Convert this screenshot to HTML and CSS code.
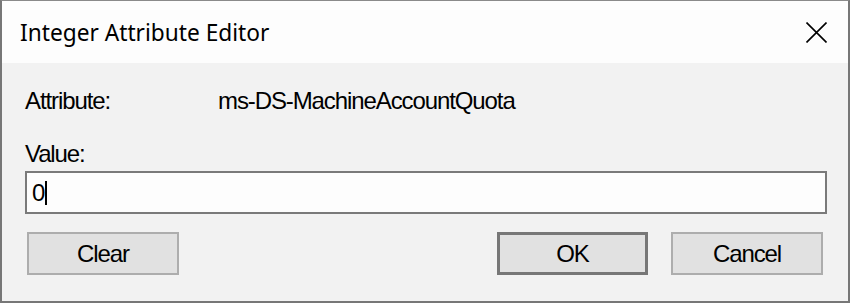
FILE: index.html
```html
<!DOCTYPE html>
<html>
<head>
<meta charset="utf-8">
<title>Integer Attribute Editor</title>
<link rel="stylesheet" href="styles.css">
</head>
<body>
<div class="window">
  <div class="titlebar">
    <span class="title">Integer Attribute Editor</span>
    <svg class="close" width="21" height="21" viewBox="0 0 21 21">
      <path d="M0.5 0.5 L20.5 20.5 M20.5 0.5 L0.5 20.5" stroke="#000" stroke-width="1.6" fill="none"/>
    </svg>
  </div>
  <div class="content">
    <div class="row attr">
      <span class="label">Attribute:</span>
      <span class="value">ms-DS-MachineAccountQuota</span>
    </div>
    <div class="row">
      <span class="label">Value:</span>
    </div>
    <div class="input"><span class="text">0</span><span class="caret"></span></div>
    <div class="buttons">
      <button class="btn">Clear</button>
      <div class="spacer"></div>
      <button class="btn default">OK</button>
      <button class="btn">Cancel</button>
    </div>
  </div>
</div>
</body>
</html>
```
FILE: styles.css
```css
html, body {
  margin: 0;
  padding: 0;
  background: #f2f2f2;
}
.window {
  width: 850px;
  height: 303px;
  box-sizing: border-box;
  border-top: 1px solid #8a8a8a;
  border-left: 2px solid #777;
  border-right: 2px solid #777;
  border-bottom: 2px solid #777;
  background: #f2f2f2;
  display: flex;
  flex-direction: column;
}
.titlebar {
  height: 62px;
  background: #fdfdfd;
  display: flex;
  align-items: center;
  justify-content: space-between;
  padding: 0 21px 0 18px;
}
.title {
  font-family: "Noto Sans", sans-serif;
  font-size: 22.7px;
  color: #000;
}
.close {
  display: block;
}
.content {
  padding: 24px 21px 0 23px;
  font-family: "Liberation Sans", Arial, sans-serif;
  font-size: 24px;
  letter-spacing: -1.1px;
  color: #000;
}
.row {
  display: flex;
  height: 28px;
  line-height: 28px;
}
.row.attr {
  margin-bottom: 25px;
}
.row.attr .label {
  width: 193px;
}
.input {
  margin-top: 3px;
  height: 43px;
  box-sizing: border-box;
  border: 2px solid #7a7a7a;
  background: #fdfdfd;
  display: flex;
  align-items: center;
  padding-left: 5px;
}
.input .text {
  line-height: 28px;
}
.caret {
  display: inline-block;
  width: 2px;
  height: 24px;
  background: #000;
  margin-left: 1px;
}
.buttons {
  display: flex;
  margin-top: 18px;
  padding-left: 2px;
  padding-right: 4px;
  gap: 23px;
}
.spacer {
  flex: 1;
}
.btn {
  width: 152px;
  height: 43px;
  box-sizing: border-box;
  border: 2px solid #adadad;
  background: #e1e1e1;
  font-family: "Liberation Sans", Arial, sans-serif;
  font-size: 24px;
  letter-spacing: -1.1px;
  color: #000;
  padding: 0;
  margin: 0;
}
.btn.default {
  width: 151px;
  border: 3px solid #777;
}
```
